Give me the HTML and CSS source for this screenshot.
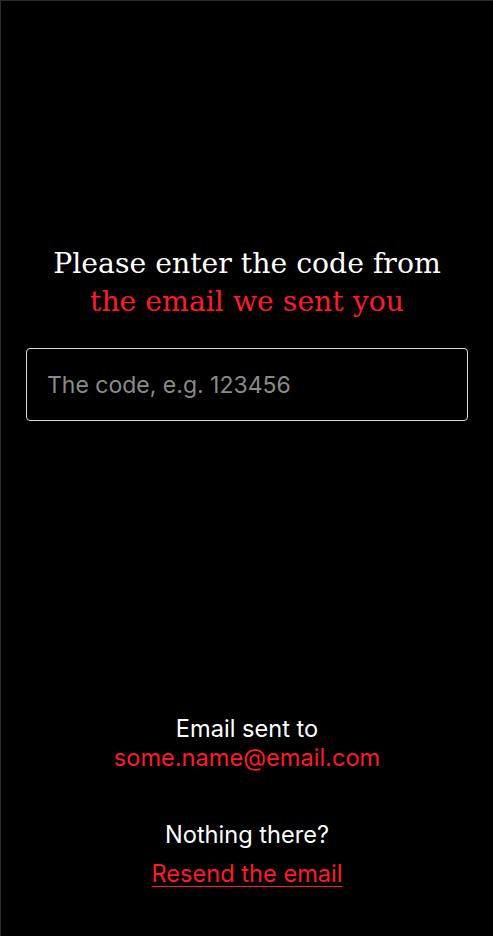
FILE: index.html
```html
<!DOCTYPE html>
<html lang="en">
<head>
<meta charset="utf-8">
<title>Enter code</title>
<link rel="stylesheet" href="styles.css">
</head>
<body>
<main class="screen">
  <section class="top">
    <h1 class="title">Please enter the code from <span class="accent">the email we sent you</span></h1>
    <input class="code-input" type="text" placeholder="The code, e.g. 123456">
  </section>
  <section class="bottom">
    <p class="info">Email sent to<br><span class="accent">some.name@email.com</span></p>
    <p class="retry">Nothing there?</p>
    <a class="resend" href="#">Resend the email</a>
  </section>
</main>
</body>
</html>
```
FILE: styles.css
```css
html, body {
  margin: 0;
  padding: 0;
  background: #000;
}
body {
  width: 493px;
  height: 936px;
  box-sizing: border-box;
  border-top: 1px solid #2a2a2a;
  border-left: 1px solid #2a2a2a;
  overflow: hidden;
}
.screen {
  display: flex;
  flex-direction: column;
  justify-content: space-between;
  height: 100%;
  padding: 0 25px 0 25px;
  box-sizing: border-box;
}
.top {
  padding-top: 244px;
  display: flex;
  flex-direction: column;
  align-items: center;
}
.title {
  margin: 0;
  font-family: "DejaVu Serif", serif;
  font-weight: normal;
  font-size: 28.3px;
  line-height: 38px;
  color: #fff;
  text-align: center;
  width: 440px;
}
.accent {
  color: #ff1a2a;
}
.code-input {
  margin-top: 27px;
  width: 100%;
  height: 73px;
  box-sizing: border-box;
  background: #000;
  border: 1px solid #dcdcdc;
  border-radius: 4px;
  padding: 0 20px;
  font-family: Inter, sans-serif;
  font-size: 23px;
  color: #fff;
  outline: none;
}
.code-input::placeholder {
  color: #8a8a8a;
}
.bottom {
  padding-bottom: 48px;
  display: flex;
  flex-direction: column;
  align-items: center;
  font-family: Inter, sans-serif;
  font-size: 23.6px;
  color: #fff;
  text-align: center;
}
.info {
  margin: 0;
  line-height: 29px;
}
.retry {
  margin: 48px 0 0 0;
  line-height: 29px;
}
.resend {
  margin-top: 10px;
  color: #ff1a2a;
  line-height: 29px;
  text-decoration: underline;
  text-underline-offset: 4px;
  text-decoration-thickness: 1px;
}
```
